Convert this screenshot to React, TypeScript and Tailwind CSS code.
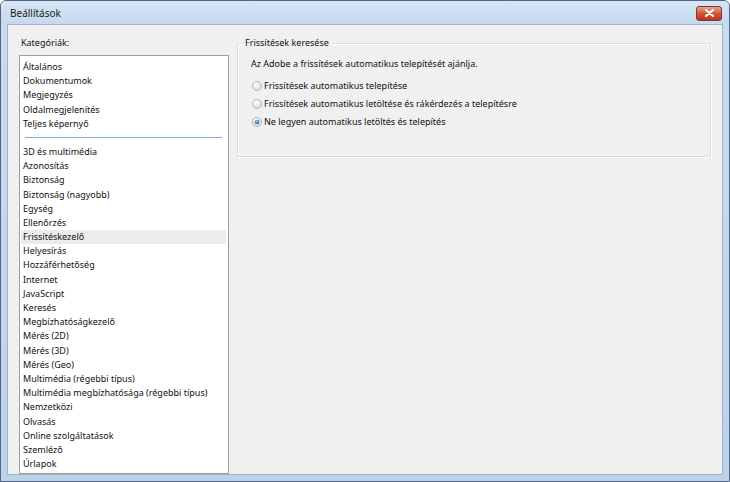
import React from "react"

const topItems = ["Általános", "Dokumentumok", "Megjegyzés", "Oldalmegjelenítés", "Teljes képernyő"]

const items = [
  "3D és multimédia",
  "Azonosítás",
  "Biztonság",
  "Biztonság (nagyobb)",
  "Egység",
  "Ellenőrzés",
  "Frissítéskezelő",
  "Helyesírás",
  "Hozzáférhetőség",
  "Internet",
  "JavaScript",
  "Keresés",
  "Megbízhatóságkezelő",
  "Mérés (2D)",
  "Mérés (3D)",
  "Mérés (Geo)",
  "Multimédia (régebbi típus)",
  "Multimédia megbízhatósága (régebbi típus)",
  "Nemzetközi",
  "Olvasás",
  "Online szolgáltatások",
  "Szemléző",
  "Úrlapok",
]

const options = [
  "Frissítések automatikus telepítése",
  "Frissítések automatikus letöltése és rákérdezés a telepítésre",
  "Ne legyen automatikus letöltés és telepítés",
]

function Radio({ checked }: { checked: boolean }) {
  return (
    <svg width="10" height="10" viewBox="0 0 11 11" className="shrink-0">
      <defs>
        <radialGradient id={checked ? "rc" : "ru"} cx="0.4" cy="0.35" r="0.7">
          <stop offset="0" stopColor="#ffffff" />
          <stop offset="1" stopColor="#d2d5d9" />
        </radialGradient>
        <radialGradient id="dot" cx="0.4" cy="0.35" r="0.7">
          <stop offset="0" stopColor="#8fd0f5" />
          <stop offset="1" stopColor="#1b5f9e" />
        </radialGradient>
      </defs>
      <circle cx="5.5" cy="5.5" r="5" fill={checked ? "url(#rc)" : "url(#ru)"} stroke="#a4a9ae" strokeWidth="0.8" />
      {checked && <circle cx="5.5" cy="5.5" r="2.6" fill="url(#dot)" />}
    </svg>
  )
}

function Row({ label, selected }: { label: string; selected?: boolean }) {
  return (
    <div className={`h-[14.2px] leading-[14.2px] pl-[2px] whitespace-nowrap ${selected ? "bg-[#ececec]" : ""}`}>
      {label}
    </div>
  )
}

export default function App() {
  return (
    <div
      className="w-[730px] h-[482px] flex flex-col bg-gradient-to-b from-[#c9dcf1] to-[#bcd2ea] border border-[#4f6580] rounded-t-[6px] text-[9px] text-[#111111] overflow-hidden"
      style={{ fontFamily: '"Noto Sans", "Open Sans", sans-serif' }}
    >
      <div className="h-[23px] shrink-0 flex items-center justify-between pl-[9px] pr-[7px] bg-gradient-to-b from-[#d6e5f5] to-[#c6d9ee]">
        <span className="text-[10px] text-[#1a1a1a] pt-[1px]">Beállítások</span>
        <div className="w-[26px] h-[15px] mt-[1px] rounded-[3px] border border-[#7a3a2c] bg-gradient-to-b from-[#e5a592] via-[#d2553a] to-[#c0301c] flex items-center justify-center">
          <svg width="9" height="8" viewBox="0 0 9 8">
            <path d="M1 1 L8 7 M8 1 L1 7" stroke="#ffffff" strokeWidth="2" strokeLinecap="round" />
          </svg>
        </div>
      </div>

      <div className="flex-1 mx-[6px] mb-[6px] bg-[#f0f0f0] border border-[#9fb2c8] flex min-h-0">
        <div className="w-[221px] pl-[11px] pt-[12px] flex flex-col">
          <div className="h-[18px] leading-[12px] pl-[2px]">Kategóriák:</div>
          <div className="flex-1 bg-white border border-[#9a9ea3] pt-[4px] pl-[1px] pr-[2px]">
            {topItems.map((t) => (
              <Row key={t} label={t} />
            ))}
            <div className="h-[14px] flex items-center px-[4px]">
              <div className="h-[1px] w-full bg-[#86acd6]" />
            </div>
            {items.map((t) => (
              <Row key={t} label={t} selected={t === "Frissítéskezelő"} />
            ))}
          </div>
        </div>

        <div className="flex-1 pl-[8px] pr-[11px] pt-[18px]">
          <div className="relative h-[114px] border border-[#dcdcdc] shadow-[inset_1px_1px_0_#ffffff,1px_1px_0_#ffffff]">
            <span className="absolute -top-[8px] left-[5px] px-[2px] bg-[#f0f0f0] leading-[14px]">Frissítések keresése</span>
            <div className="pl-[13px] pt-[13px]">
              <div className="h-[20px] leading-[14px]">Az Adobe a frissítések automatikus telepítését ajánlja.</div>
              <div className="flex flex-col gap-[4px] pl-[1px] pt-[2px]">
                {options.map((o, i) => (
                  <div key={o} className="flex items-center gap-[2px] h-[14px]">
                    <Radio checked={i === 2} />
                    <span className="leading-[14px]">{o}</span>
                  </div>
                ))}
              </div>
            </div>
          </div>
        </div>
      </div>
    </div>
  )
}
